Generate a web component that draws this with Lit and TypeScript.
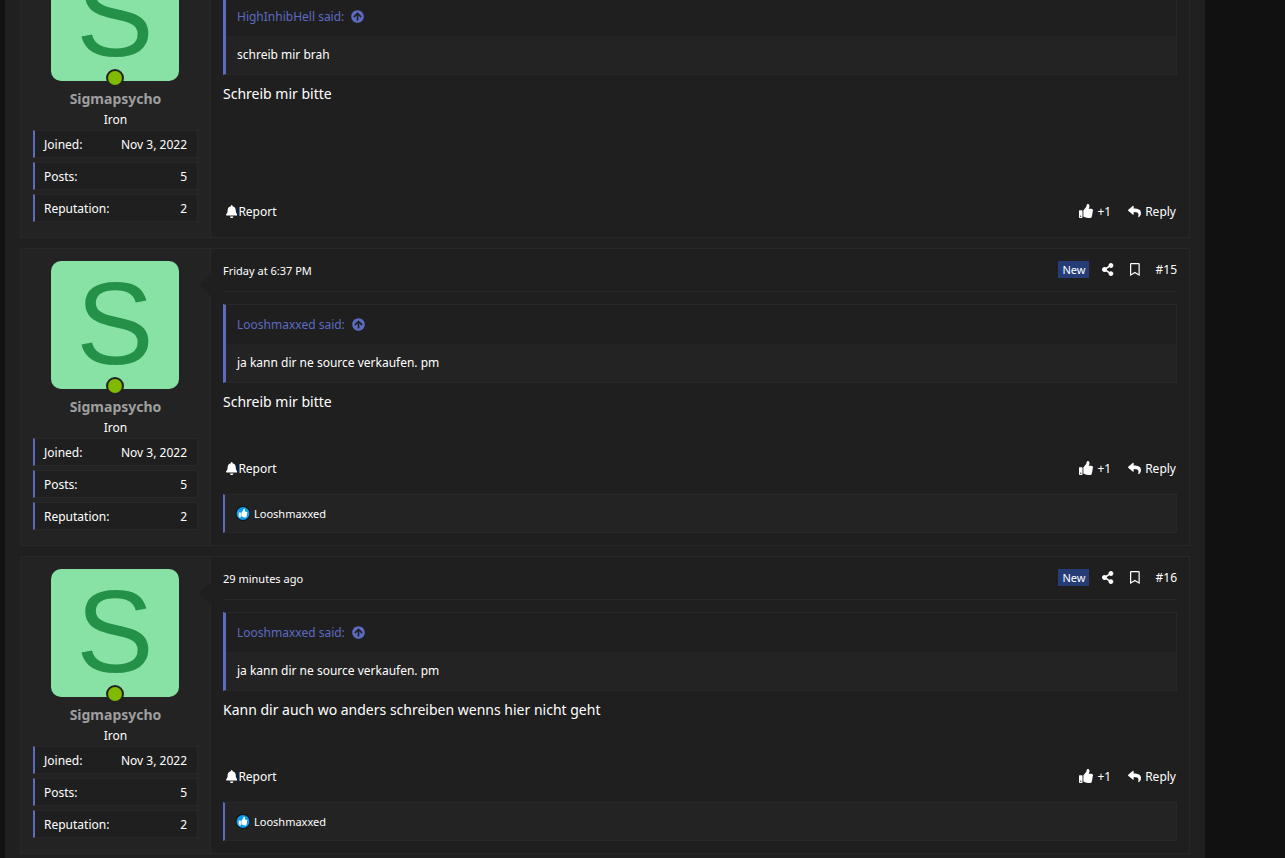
import { LitElement, html, css, svg, nothing } from "lit";
import { customElement, property } from "lit/decorators.js";

interface Post {
  time?: string;
  number?: string;
  quoteAuthor: string;
  quoteText: string;
  message: string;
  reaction?: string;
}

const POSTS: Post[] = [
  {
    quoteAuthor: "HighInhibHell",
    quoteText: "schreib mir brah",
    message: "Schreib mir bitte",
  },
  {
    time: "Friday at 6:37 PM",
    number: "#15",
    quoteAuthor: "Looshmaxxed",
    quoteText: "ja kann dir ne source verkaufen. pm",
    message: "Schreib mir bitte",
    reaction: "Looshmaxxed",
  },
  {
    time: "29 minutes ago",
    number: "#16",
    quoteAuthor: "Looshmaxxed",
    quoteText: "ja kann dir ne source verkaufen. pm",
    message: "Kann dir auch wo anders schreiben wenns hier nicht geht",
    reaction: "Looshmaxxed",
  },
];

const ICONS = {
  share: {
    w: 448,
    d: "M352 320c-22.608 0-43.387 7.819-59.79 20.895l-102.486-64.054a96.551 96.551 0 0 0 0-41.683l102.486-64.054C308.613 184.181 329.392 192 352 192c53.019 0 96-42.981 96-96S405.019 0 352 0s-96 42.981-96 96c0 7.158.79 14.13 2.276 20.841L155.79 180.895C139.387 167.819 118.608 160 96 160c-53.019 0-96 42.981-96 96s42.981 96 96 96c22.608 0 43.387-7.819 59.79-20.895l102.486 64.054A96.301 96.301 0 0 0 256 416c0 53.019 42.981 96 96 96s96-42.981 96-96-42.981-96-96-96z",
  },
  bookmark: {
    w: 384,
    d: "M336 0H48C21.49 0 0 21.49 0 48v464l192-112 192 112V48c0-26.51-21.49-48-48-48zm0 428.43l-144-84-144 84V54a6 6 0 0 1 6-6h276c3.314 0 6 2.683 6 5.996V428.43z",
  },
  bell: {
    w: 448,
    d: "M224 512c35.32 0 63.97-28.65 63.97-64H160.03c0 35.35 28.65 64 63.97 64zm215.39-149.71c-19.32-20.76-55.47-51.99-55.47-154.29 0-77.7-54.48-139.9-127.94-155.16V32c0-17.67-14.32-32-31.98-32s-31.98 14.33-31.98 32v20.84C118.56 68.1 64.08 130.3 64.08 208c0 102.3-36.15 133.53-55.47 154.29-6 6.45-8.66 14.16-8.61 21.71.11 16.4 12.98 32 32.1 32h383.8c19.12 0 32-15.6 32.1-32 .05-7.55-2.61-15.27-8.61-21.71z",
  },
  thumb: {
    w: 512,
    d: "M104 224H24c-13.255 0-24 10.745-24 24v240c0 13.255 10.745 24 24 24h80c13.255 0 24-10.745 24-24V248c0-13.255-10.745-24-24-24zM64 472c-13.255 0-24-10.745-24-24s10.745-24 24-24 24 10.745 24 24-10.745 24-24 24zM384 81.452c0 42.416-25.97 66.208-33.277 94.548h101.723c33.397 0 59.397 27.746 59.553 58.098.084 17.938-7.546 37.249-19.439 49.197l-.11.11c9.836 23.337 8.237 56.037-9.308 79.469 8.681 25.895-.069 57.704-16.382 74.757 4.298 17.598 2.244 32.575-6.148 44.632C440.202 511.587 389.616 512 346.839 512l-2.845-.001c-48.287-.017-87.806-17.598-119.56-31.725-15.957-7.099-36.821-15.887-52.651-16.178-6.54-.12-11.783-5.457-11.783-11.998v-213.77c0-3.2 1.282-6.271 3.558-8.521 39.614-39.144 56.648-80.587 89.117-113.111 14.804-14.832 20.188-37.236 25.393-58.902C282.515 39.293 291.817 0 312 0c24 0 72 8 72 81.452z",
  },
  reply: {
    w: 512,
    d: "M8.309 189.836L184.313 37.851C199.719 24.546 224 35.347 224 56.015v80.053c160.629 1.839 288 34.032 288 186.258 0 61.441-39.581 122.309-83.333 154.132-13.653 9.931-33.111-2.533-28.077-18.631 45.344-145.012-21.507-183.51-176.59-185.742V360c0 20.7-24.3 31.453-39.687 18.164l-176.004-152c-11.071-9.562-11.086-26.753 0-36.328z",
  },
  up: {
    w: 512,
    d: "M8 256C8 119 119 8 256 8s248 111 248 248-111 248-248 248S8 393 8 256zm143.6 28.9l72.4-75.5V392c0 13.3 10.7 24 24 24h16c13.3 0 24-10.7 24-24V209.4l72.4 75.5c9.3 9.7 24.8 9.9 34.3.4l10.9-11c9.4-9.4 9.4-24.6 0-33.9L273 107.7c-9.4-9.4-24.6-9.4-33.9 0L106.3 240.4c-9.4 9.4-9.4 24.6 0 33.9l10.9 11c9.6 9.5 25.1 9.3 34.4-.4z",
  },
};

const icon = (name: keyof typeof ICONS) => html`
  <svg class="icon" viewBox="0 0 ${ICONS[name].w} 512" aria-hidden="true">
    ${svg`<path fill="currentColor" d=${ICONS[name].d}></path>`}
  </svg>
`;

@customElement("user-cell")
class UserCell extends LitElement {
  static styles = css`
    :host {
      display: block;
      box-sizing: border-box;
      width: 190px;
      flex: none;
      padding: 12px 12px 15px;
      background: #232323;
      border-right: 1px solid #282828;
      text-align: center;
    }
    .avatar {
      position: relative;
      display: block;
      width: 128px;
      height: 128px;
      margin: 0 0 8px 18px;
      border-radius: 10px;
      background: #88e2a5;
      color: #249148;
      font: 116px/126px "Liberation Sans", Arial, sans-serif;
      text-decoration: none;
    }
    .online {
      position: absolute;
      left: 55px;
      bottom: -6px;
      box-sizing: border-box;
      width: 18px;
      height: 18px;
      border: 2px solid #232323;
      border-radius: 50%;
      background: #7fb900;
    }
    .name {
      display: block;
      color: #9e9e9e;
      font-size: 14px;
      line-height: 20px;
      font-weight: 700;
      text-decoration: none;
    }
    .rank {
      font-size: 12px;
      line-height: 21px;
    }
    .stats {
      display: flex;
      flex-direction: column;
      gap: 4px;
      margin: 0;
    }
    .stat {
      display: flex;
      justify-content: space-between;
      box-sizing: border-box;
      height: 28px;
      padding: 0 10px 0 9px;
      border: 1px solid #282828;
      border-left: 2px solid #5c6bc0;
      background: #1f1f1f;
      font-size: 12px;
      line-height: 28px;
    }
    .stat dd {
      margin: 0;
    }
  `;

  render() {
    const stats = [
      ["Joined:", "Nov 3, 2022"],
      ["Posts:", "5"],
      ["Reputation:", "2"],
    ];
    return html`
      <a class="avatar" href="#member">S<span class="online"></span></a>
      <a class="name" href="#member">Sigmapsycho</a>
      <div class="rank">Iron</div>
      <dl class="stats">
        ${stats.map(
          ([label, value]) =>
            html`<div class="stat"><dt>${label}</dt><dd>${value}</dd></div>`
        )}
      </dl>
    `;
  }
}

@customElement("forum-post")
class ForumPost extends LitElement {
  @property({ attribute: false }) post!: Post;

  static styles = css`
    :host {
      display: block;
    }
    .post {
      display: flex;
      border: 1px solid #282828;
      background: #1f1f1f;
    }
    .main {
      position: relative;
      display: flex;
      flex: 1;
      min-width: 0;
      flex-direction: column;
      padding: 0 12px;
    }
    .caret {
      position: absolute;
      left: -11px;
      top: 25px;
      width: 11px;
      height: 22px;
      background: #1f1f1f;
      clip-path: polygon(100% 0, 100% 100%, 0 50%);
    }
    .head {
      display: flex;
      align-items: center;
      justify-content: space-between;
      box-sizing: border-box;
      height: 43px;
      border-bottom: 1px solid #282828;
      font-size: 11px;
    }
    a {
      color: inherit;
      text-decoration: none;
    }
    .tools {
      display: flex;
      align-items: center;
      padding-bottom: 2px;
      font-size: 12px;
    }
    .tools a,
    .tools button {
      display: flex;
      margin-left: 16px;
    }
    .badge {
      padding: 0 4px;
      background: #263c76;
      font-size: 11px;
      line-height: 17px;
    }
    .tools .badge + a {
      margin-left: 13px;
    }
    button {
      padding: 0;
      border: 0;
      background: none;
      color: inherit;
      font: inherit;
    }
    .icon {
      display: block;
      height: 13px;
    }
    .quote {
      margin: 12px 0 7px;
      border: 1px solid #282828;
      border-left: 3px solid #5c6bc0;
      background: #232323;
      font-size: 12px;
    }
    .source {
      display: flex;
      align-items: center;
      gap: 7px;
      height: 39px;
      padding: 0 11px;
      background: #1f1f1f;
      color: #5c6bc0;
    }
    .quoted {
      padding: 0 11px;
      line-height: 38px;
    }
    .message {
      flex: 1;
      font-size: 14px;
      line-height: 24px;
    }
    .foot {
      display: flex;
      justify-content: space-between;
      height: 24px;
      margin-bottom: 14px;
      padding: 0 1px 0 3px;
      font-size: 12px;
    }
    .actions {
      display: flex;
      gap: 17px;
    }
    .action {
      display: flex;
      align-items: center;
      gap: 4px;
    }
    .action.like .icon {
      height: 14px;
    }
    .action.report {
      gap: 1px;
    }
    .reactions {
      display: flex;
      align-items: center;
      box-sizing: border-box;
      height: 39px;
      margin-bottom: 12px;
      padding: 0 10px;
      gap: 3px;
      border: 1px solid #282828;
      border-left: 2px solid #5c6bc0;
      background: #232323;
      font-size: 11px;
    }
    .reaction {
      width: 16px;
      height: 16px;
    }
  `;

  render() {
    const p = this.post;
    return html`
      <article class="post">
        <user-cell></user-cell>
        <div class="main">
          <span class="caret"></span>
          <header class="head">
            ${p.time
              ? html`<a href="#post"><time>${p.time}</time></a>
                  <div class="tools">
                    <span class="badge">New</span>
                    <a href="#share" aria-label="Share">${icon("share")}</a>
                    <button aria-label="Bookmark">${icon("bookmark")}</button>
                    <a href="#post">${p.number}</a>
                  </div>`
              : nothing}
          </header>
          <div class="quote">
            <a class="source" href="#quote">${p.quoteAuthor} said: ${icon("up")}</a>
            <div class="quoted">${p.quoteText}</div>
          </div>
          <div class="message">${p.message}</div>
          <div class="foot">
            <a class="action report" href="#report">${icon("bell")}Report</a>
            <div class="actions">
              <a class="action like" href="#like">${icon("thumb")}+1</a>
              <a class="action" href="#reply">${icon("reply")}Reply</a>
            </div>
          </div>
          ${p.reaction
            ? html`<a class="reactions" href="#reactions">
                <svg class="reaction" viewBox="0 0 16 16" aria-hidden="true">
                  <circle cx="8" cy="7.5" r="7.5" fill="#0b1218"></circle>
                  <circle cx="8" cy="7.5" r="6.5" fill="#0e9bea"></circle>
                  <path transform="translate(3.7 2.8) scale(.0168)" fill="#fff" d=${ICONS.thumb.d}></path>
                </svg>
                ${p.reaction}
              </a>`
            : nothing}
        </div>
      </article>
    `;
  }
}

@customElement("app-root")
class AppRoot extends LitElement {
  static styles = css`
    :host {
      display: block;
      height: 100vh;
      overflow: hidden;
      background: #111111;
      color: #ffffff;
      font-family: "Segoe UI", "Noto Sans", "Open Sans", sans-serif;
    }
    .page {
      box-sizing: border-box;
      max-width: 1200px;
      min-height: 100%;
      margin-left: 5px;
      padding: 0 15px;
      background: #202020;
    }
    /* The thread is scrolled part of the way into its first post. */
    .thread {
      display: flex;
      flex-direction: column;
      gap: 10px;
      margin-top: -60px;
      padding-bottom: 70px;
    }
  `;

  render() {
    return html`
      <main class="page">
        <div class="thread">
          ${POSTS.map((post) => html`<forum-post .post=${post}></forum-post>`)}
        </div>
      </main>
    `;
  }
}
